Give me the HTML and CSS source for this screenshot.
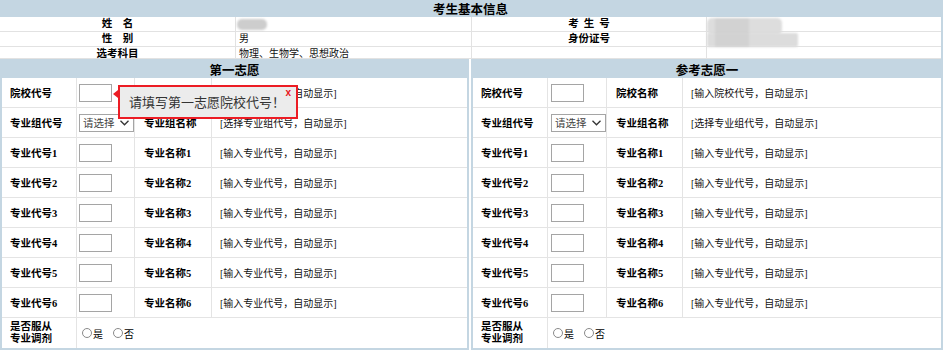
FILE: index.html
```html
<!DOCTYPE html>
<html lang="zh-CN">
<head>
<meta charset="utf-8">
<title>考生基本信息</title>
<link rel="stylesheet" href="styles.css">
</head>
<body>
<div class="page">
  <div class="info">
    <div class="title">考生基本信息</div>
    <div class="lab"><span class="gap-wide">姓</span>名</div>
    <div class="val"></div>
    <div class="lab"><span class="gap-narrow">考</span><span class="gap-narrow">生</span>号</div>
    <div class="val"></div>
    <div class="lab"><span class="gap-wide">性</span>别</div>
    <div class="val">男</div>
    <div class="lab">身份证号</div>
    <div class="val"></div>
    <div class="lab">选考科目</div>
    <div class="val">物理、生物学、思想政治</div>
    <div class="lab"></div>
    <div class="val"></div>
    <span class="blob blob-name"></span>
    <span class="blob blob-no"><span class="blob-part"></span></span>
    <span class="blob blob-id"><span class="blob-part"></span></span>
  </div>

  <div class="choices">
    <section class="panel panel-left">
      <div class="head">第一志愿</div>

      <div class="lab">院校代号</div>
      <div class="inp"><span class="box"></span></div>
      <div class="lab2">院校名称</div>
      <div class="val">[输入院校代号，自动显示]</div>

      <div class="lab">专业组代号</div>
      <div class="inp"><span class="select">请选择<svg class="chev" width="9" height="6" viewBox="0 0 9 6"><path d="M0.5 0.8 L4.5 4.8 L8.5 0.8" fill="none" stroke="#333" stroke-width="1.3"/></svg></span></div>
      <div class="lab2">专业组名称</div>
      <div class="val">[选择专业组代号，自动显示]</div>

      <div class="lab">专业代号1</div>
      <div class="inp"><span class="box"></span></div>
      <div class="lab2">专业名称1</div>
      <div class="val">[输入专业代号，自动显示]</div>

      <div class="lab">专业代号2</div>
      <div class="inp"><span class="box"></span></div>
      <div class="lab2">专业名称2</div>
      <div class="val">[输入专业代号，自动显示]</div>

      <div class="lab">专业代号3</div>
      <div class="inp"><span class="box"></span></div>
      <div class="lab2">专业名称3</div>
      <div class="val">[输入专业代号，自动显示]</div>

      <div class="lab">专业代号4</div>
      <div class="inp"><span class="box"></span></div>
      <div class="lab2">专业名称4</div>
      <div class="val">[输入专业代号，自动显示]</div>

      <div class="lab">专业代号5</div>
      <div class="inp"><span class="box"></span></div>
      <div class="lab2">专业名称5</div>
      <div class="val">[输入专业代号，自动显示]</div>

      <div class="lab">专业代号6</div>
      <div class="inp"><span class="box"></span></div>
      <div class="lab2">专业名称6</div>
      <div class="val">[输入专业代号，自动显示]</div>

      <div class="lab lab-two">是否服从<br>专业调剂</div>
      <div class="radios"><span class="radio"></span>是<span class="radio radio-second"></span>否</div>

      <div class="tip">
        <span class="tip-arrow"></span>
        请填写第一志愿院校代号！
        <span class="tip-close">x</span>
      </div>
    </section>

    <section class="panel panel-right">
      <div class="head">参考志愿一</div>

      <div class="lab">院校代号</div>
      <div class="inp"><span class="box"></span></div>
      <div class="lab2">院校名称</div>
      <div class="val">[输入院校代号，自动显示]</div>

      <div class="lab">专业组代号</div>
      <div class="inp"><span class="select">请选择<svg class="chev" width="9" height="6" viewBox="0 0 9 6"><path d="M0.5 0.8 L4.5 4.8 L8.5 0.8" fill="none" stroke="#333" stroke-width="1.3"/></svg></span></div>
      <div class="lab2">专业组名称</div>
      <div class="val">[选择专业组代号，自动显示]</div>

      <div class="lab">专业代号1</div>
      <div class="inp"><span class="box"></span></div>
      <div class="lab2">专业名称1</div>
      <div class="val">[输入专业代号，自动显示]</div>

      <div class="lab">专业代号2</div>
      <div class="inp"><span class="box"></span></div>
      <div class="lab2">专业名称2</div>
      <div class="val">[输入专业代号，自动显示]</div>

      <div class="lab">专业代号3</div>
      <div class="inp"><span class="box"></span></div>
      <div class="lab2">专业名称3</div>
      <div class="val">[输入专业代号，自动显示]</div>

      <div class="lab">专业代号4</div>
      <div class="inp"><span class="box"></span></div>
      <div class="lab2">专业名称4</div>
      <div class="val">[输入专业代号，自动显示]</div>

      <div class="lab">专业代号5</div>
      <div class="inp"><span class="box"></span></div>
      <div class="lab2">专业名称5</div>
      <div class="val">[输入专业代号，自动显示]</div>

      <div class="lab">专业代号6</div>
      <div class="inp"><span class="box"></span></div>
      <div class="lab2">专业名称6</div>
      <div class="val">[输入专业代号，自动显示]</div>

      <div class="lab lab-two">是否服从<br>专业调剂</div>
      <div class="radios"><span class="radio"></span>是<span class="radio radio-second"></span>否</div>
    </section>
  </div>
</div>
</body>
</html>
```

FILE: styles.css
```css
* {
  box-sizing: border-box;
  margin: 0;
  padding: 0;
}

body {
  margin: 0;
  width: 944px;
  height: 350px;
  overflow: hidden;
  background: #fff;
  color: #000;
  font-family: "Liberation Serif", "Noto Sans CJK SC", serif;
  font-size: 10px;
}

.page {
  position: relative;
  width: 944px;
}

/* ---------- basic info ---------- */
.info {
  position: relative;
  display: grid;
  width: 943px;
  grid-template-columns: 236px 236px 235px 234px;
  grid-template-rows: 17px 15px 15px 12px;
  border-right: 2px solid #c4d6e2;
}

.title {
  grid-column: 1 / -1;
  background: #c4d6e2;
  text-align: center;
  font-family: "Noto Sans CJK SC", sans-serif;
  font-weight: 700;
  font-size: 12.5px;
  line-height: 17px;
}

.info .lab,
.info .val {
  border-bottom: 1px solid #e2e2e2;
  border-right: 1px solid #e2e2e2;
  line-height: 14px;
  white-space: nowrap;
}

.info > div:nth-child(4n+1) {
  border-right: none;
}

.info .lab {
  text-align: center;
  font-weight: 700;
  font-size: 10.5px;
}

.info .val {
  padding-left: 3px;
  font-size: 10px;
  color: #111;
}

.gap-wide {
  margin-right: 10.5px;
}

.gap-narrow {
  margin-right: 5px;
}

.blob {
  position: absolute;
  background: #d9d9d9;
  border-radius: 5px;
  filter: blur(1.2px);
}

.blob-name {
  left: 237px;
  top: 19px;
  width: 30px;
  height: 11px;
  background: #cdcdcd;
}

.blob-no {
  left: 707px;
  top: 18px;
  width: 75px;
  height: 17px;
  background: #dddddd;
}

.blob-id {
  left: 707px;
  top: 33px;
  width: 91px;
  height: 14px;
  border-radius: 2px;
  background: #dcdcdc;
}

.blob-part {
  position: absolute;
  left: 8px;
  top: 0;
  width: 34px;
  height: 100%;
  background: #d2d2d2;
}

/* ---------- choices ---------- */
.choices {
  display: flex;
  gap: 2px;
}

.panel {
  position: relative;
  display: grid;
  grid-template-rows: 17px repeat(9, 30px);
  border: 2px solid #c4d6e2;
}

.panel-left {
  width: 469px;
  grid-template-columns: 75px 58px 77px 1fr;
}

.panel-right {
  width: 472px;
  grid-template-columns: 75px 59px 76px 1fr;
}

.head {
  grid-column: 1 / -1;
  background: #c4d6e2;
  text-align: center;
  font-family: "Noto Sans CJK SC", sans-serif;
  font-weight: 700;
  font-size: 12.5px;
  line-height: 17px;
}

.panel .lab,
.panel .inp,
.panel .lab2,
.panel .val,
.panel .radios {
  display: flex;
  align-items: center;
  border-bottom: 1px solid #e4e4e4;
  border-right: 1px solid #e4e4e4;
  white-space: nowrap;
}

.panel .val,
.panel .radios {
  border-right: none;
}

.panel .lab-two,
.panel .radios {
  border-bottom: none;
}

.panel .lab {
  padding-left: 8px;
  font-weight: 700;
  font-size: 10.5px;
}

.panel .lab2 {
  padding-left: 9px;
  font-weight: 700;
  font-size: 10.5px;
}

.panel .val {
  padding-left: 8px;
  font-size: 10px;
  color: #111;
}

.panel .inp {
  padding-left: 2px;
}

.panel-right .inp {
  padding-left: 3px;
}

.lab-two {
  line-height: 12px;
}

.box {
  display: block;
  width: 33px;
  height: 18px;
  border: 1px solid #a5a5a5;
  background: #fff;
}

.select {
  display: flex;
  align-items: center;
  width: 55px;
  height: 18px;
  border: 1px solid #a5a5a5;
  padding-left: 3px;
  font-family: "Noto Sans CJK SC", sans-serif;
  font-size: 10.5px;
  color: #444;
  background: #fff;
}

.chev {
  margin-left: 5px;
}

.radios {
  grid-column: 2 / -1;
  padding-left: 5px;
  font-size: 10px;
}

.radio {
  display: inline-block;
  width: 10px;
  height: 10px;
  border: 1px solid #8a8a8a;
  border-radius: 50%;
  margin-right: 1px;
  background: #fff;
}

.radio-second {
  margin-left: 10px;
}

/* ---------- tooltip ---------- */
.tip {
  position: absolute;
  left: 116px;
  top: 24px;
  width: 180px;
  height: 34px;
  border: 2px solid #ec1c24;
  background: #ececec;
  padding-left: 9px;
  font-family: "Noto Sans CJK SC", sans-serif;
  font-size: 13px;
  line-height: 30px;
  color: #333;
  white-space: nowrap;
}

.tip-arrow {
  position: absolute;
  left: -7px;
  top: 3px;
  width: 0;
  height: 0;
  border-top: 4px solid transparent;
  border-bottom: 4px solid transparent;
  border-right: 5px solid #ec1c24;
}

.tip-close {
  position: absolute;
  right: 5px;
  top: 1px;
  font-family: "Liberation Sans", sans-serif;
  font-weight: 700;
  font-size: 10px;
  line-height: 10px;
  color: #e8141c;
}
```
